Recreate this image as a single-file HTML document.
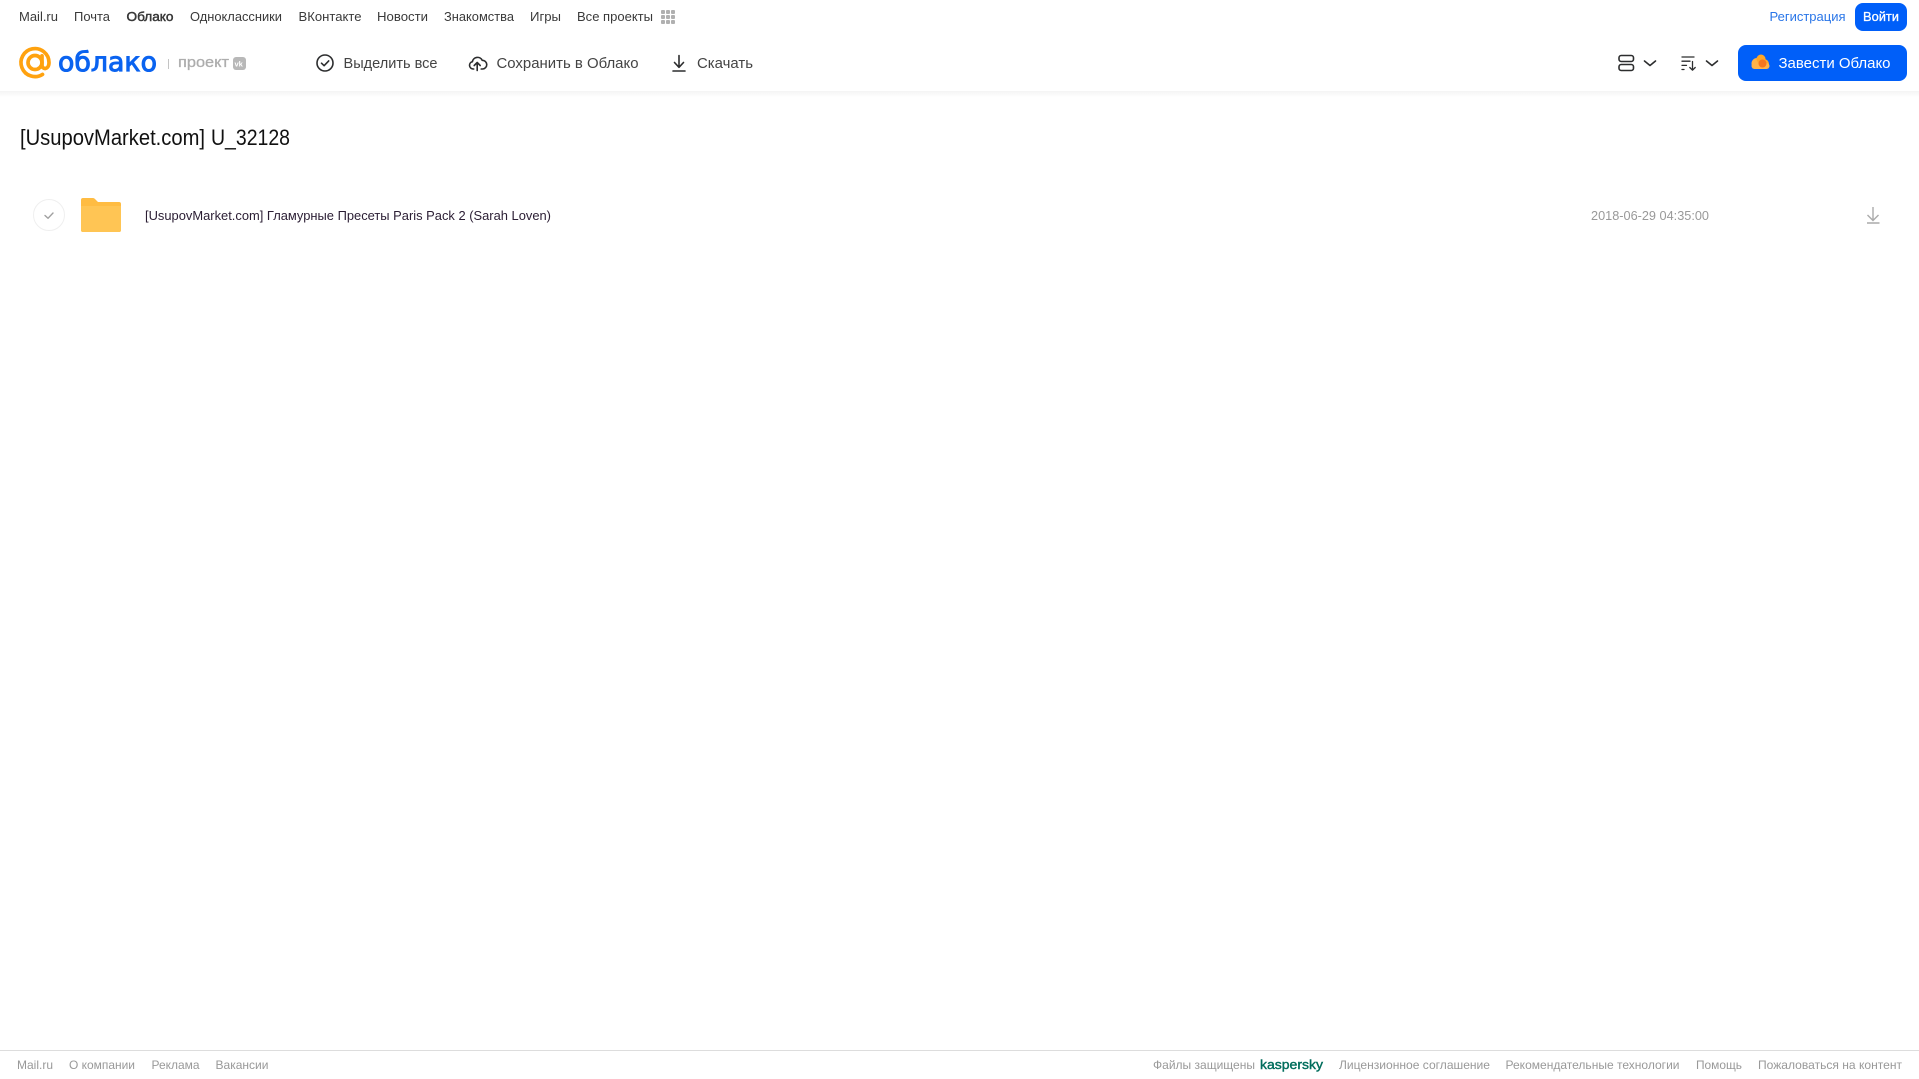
<!DOCTYPE html>
<html lang="ru"><head><meta charset="utf-8"><title>Облако</title>
<style>
html,body{margin:0;padding:0;background:#fff;width:1919px;height:1079px;overflow:hidden}
svg{display:block;position:absolute;left:0;top:0}
text{font-family:"Liberation Sans",sans-serif}
.n{font-size:13px;fill:#3a3a3a}
.t{font-size:14.5px;fill:#444}
.f{font-size:12px;fill:#999}
.i{fill:none;stroke:#2c2d2e;stroke-width:1.6;stroke-linecap:round;stroke-linejoin:round}
</style></head><body>
<svg width="1919" height="1079" viewBox="0 0 1919 1079" xmlns="http://www.w3.org/2000/svg">
<defs><linearGradient id="s" x1="0" y1="0" x2="0" y2="1"><stop offset="0" stop-color="#f4f4f4"/><stop offset="1" stop-color="#fff"/></linearGradient></defs>
<rect width="1919" height="1079" fill="#fff"/>
<rect x="0" y="91" width="1919" height="6" fill="url(#s)"/>

<text class="n" x="19" y="21" textLength="39" lengthAdjust="spacingAndGlyphs">Mail.ru</text>
<text class="n" x="74" y="21" textLength="36" lengthAdjust="spacingAndGlyphs">Почта</text>
<text class="n" x="126.500" y="21" textLength="47" lengthAdjust="spacingAndGlyphs" stroke="#333" stroke-width=".45">Облако</text>
<text class="n" x="190" y="21" textLength="92" lengthAdjust="spacingAndGlyphs">Одноклассники</text>
<text class="n" x="298.500" y="21" textLength="63" lengthAdjust="spacingAndGlyphs">ВКонтакте</text>
<text class="n" x="377" y="21" textLength="51" lengthAdjust="spacingAndGlyphs">Новости</text>
<text class="n" x="444" y="21" textLength="70" lengthAdjust="spacingAndGlyphs">Знакомства</text>
<text class="n" x="530" y="21" textLength="31" lengthAdjust="spacingAndGlyphs">Игры</text>
<text class="n" x="577" y="21" textLength="76" lengthAdjust="spacingAndGlyphs">Все проекты</text>
<g fill="#b0b0b0"><rect x="661" y="10" width="4" height="4" rx="1"/><rect x="666" y="10" width="4" height="4" rx="1"/><rect x="671" y="10" width="4" height="4" rx="1"/><rect x="661" y="15" width="4" height="4" rx="1"/><rect x="666" y="15" width="4" height="4" rx="1"/><rect x="671" y="15" width="4" height="4" rx="1"/><rect x="661" y="20" width="4" height="4" rx="1"/><rect x="666" y="20" width="4" height="4" rx="1"/><rect x="671" y="20" width="4" height="4" rx="1"/></g>

<text x="1769.500" y="21" font-size="13" fill="#2a76e8" textLength="76" lengthAdjust="spacingAndGlyphs">Регистрация</text>
<rect x="1855" y="3" width="52" height="28" rx="8" fill="#005ff9"/>
<text x="1863" y="21" font-size="13" fill="#fff" stroke="#fff" stroke-width=".3" textLength="36" lengthAdjust="spacingAndGlyphs">Войти</text>

<g fill="none" stroke="#ffa20f" stroke-width="3.700" stroke-linecap="round"><circle cx="35" cy="62.500" r="7"/><path d="M42 55.800V65C42 70 49 70 49 62.500A14 14 0 1 0 42.500 74.400"/></g>
<text x="58" y="71" font-size="27" fill="#0a63f0" stroke="#0a63f0" stroke-width="1" style='font-family:"DejaVu Sans",sans-serif' textLength="99" lengthAdjust="spacingAndGlyphs">облако</text>
<rect x="168" y="59" width="1" height="10" fill="#c4c4c4"/>
<text x="178" y="67" font-size="15" fill="#adadad" stroke="#adadad" stroke-width=".3" textLength="51" lengthAdjust="spacingAndGlyphs">проект</text>
<rect x="233" y="57" width="13" height="13" rx="3" fill="#b8b8b8"/>
<text x="234.500" y="66.500" font-size="7.500" font-weight="700" fill="#fff">vk</text>

<circle class="i" cx="325" cy="63" r="8"/><path class="i" d="M321.500 63.200l2.600 2.500 4.600-4.800"/>
<text class="t" x="343.500" y="68" textLength="94" lengthAdjust="spacingAndGlyphs">Выделить все</text>
<g transform="translate(-.8 -.5)"><path class="i" d="M474.500 69.500H473.800a3.700 3.700 0 0 1-.6-7.300 5.200 5.200 0 0 1 9.800-1.400 4.300 4.300 0 0 1 .4 8.700H482"/><path class="i" d="M478 71V63M475 66l3-3 3 3"/></g>
<text class="t" x="496.500" y="68" textLength="142" lengthAdjust="spacingAndGlyphs">Сохранить в Облако</text>
<path class="i" d="M679 55.500V67M674.500 62.500l4.500 4.800 4.500-4.800M673 71h12"/>
<text class="t" x="697" y="68" textLength="56" lengthAdjust="spacingAndGlyphs">Скачать</text>

<rect x="1619" y="55.500" width="14.500" height="6" rx="2.200" class="i"/><rect x="1619" y="64.500" width="14.500" height="6" rx="2.200" class="i"/>
<path class="i" d="M1644.500 61l5.500 4.500 5.500-4.500"/>
<path class="i" style="stroke-width:1.300" d="M1682 57h12M1682 61.200h8M1682 65.400h4.500M1682 69.500h2M1692.500 61.500v8.500M1689.800 67.500l2.700 2.700 2.700-2.700"/>
<path class="i" d="M1706.500 61l5.500 4.500 5.500-4.500"/>
<rect x="1738" y="45" width="169" height="36" rx="8" fill="#005ff9"/>
<circle cx="1757" cy="63.500" r="5.500" fill="#ffb347"/><circle cx="1761" cy="59" r="4.500" fill="#ffa726"/><circle cx="1764" cy="64" r="5" fill="#ffa726"/><rect x="1751.500" y="63" width="18" height="6" rx="3" fill="#ffb347"/><circle cx="1762.500" cy="63.500" r="4" fill="#f4761f"/>
<text x="1778.500" y="68" font-size="14.500" fill="#fff" textLength="112" lengthAdjust="spacingAndGlyphs">Завести Облако</text>

<text x="20" y="145" font-size="22" fill="#111" textLength="185" lengthAdjust="spacingAndGlyphs">[UsupovMarket.com]</text>
<text x="211" y="145" font-size="22" fill="#111" textLength="79" lengthAdjust="spacingAndGlyphs">U_32128</text>

<circle cx="49" cy="215" r="15.500" fill="#fff" stroke="#efefef"/>
<path d="M45 215.500l3 2.800 5-5.300" fill="none" stroke="#a0a0a0" stroke-width="1.400" stroke-linecap="round" stroke-linejoin="round"/>
<path d="M83 198H93a3 3 0 0 1 2 1l3 3H119a2 2 0 0 1 2 2V230a2 2 0 0 1-2 2H83a2 2 0 0 1-2-2V200a2 2 0 0 1 2-2z" fill="#ffbc42"/>
<path d="M81 206H121V230a2 2 0 0 1-2 2H83a2 2 0 0 1-2-2z" fill="#ffc554"/>
<text x="145" y="220" font-size="12.500" fill="#2a1d33" textLength="406" lengthAdjust="spacingAndGlyphs">[UsupovMarket.com] Гламурные Пресеты Paris Pack 2 (Sarah Loven)</text>
<text x="1591" y="220" font-size="12.500" fill="#999" textLength="118" lengthAdjust="spacingAndGlyphs">2018-06-29 04:35:00</text>
<path d="M1873 207V220.500M1867.500 215l5.500 5.500 5.500-5.500M1867 223h12.500" fill="none" stroke="#aaa" stroke-width="1.400"/>

<rect x="0" y="1050" width="1919" height="1" fill="#ddd"/>
<text class="f" x="17" y="1069" textLength="36" lengthAdjust="spacingAndGlyphs">Mail.ru</text>
<text class="f" x="69" y="1069" textLength="66" lengthAdjust="spacingAndGlyphs">О компании</text>
<text class="f" x="151.500" y="1069" textLength="48" lengthAdjust="spacingAndGlyphs">Реклама</text>
<text class="f" x="215.500" y="1069" textLength="53" lengthAdjust="spacingAndGlyphs">Вакансии</text>
<text class="f" x="1153" y="1069" textLength="102" lengthAdjust="spacingAndGlyphs">Файлы защищены</text>
<text x="1260" y="1069" font-size="13" fill="#006d5c" stroke="#006d5c" stroke-width=".4" textLength="63" lengthAdjust="spacingAndGlyphs">kaspersky</text>
<text class="f" x="1339" y="1069" textLength="151" lengthAdjust="spacingAndGlyphs">Лицензионное соглашение</text>
<text class="f" x="1505.500" y="1069" textLength="174" lengthAdjust="spacingAndGlyphs">Рекомендательные технологии</text>
<text class="f" x="1696" y="1069" textLength="46" lengthAdjust="spacingAndGlyphs">Помощь</text>
<text class="f" x="1758" y="1069" textLength="144" lengthAdjust="spacingAndGlyphs">Пожаловаться на контент</text>
</svg>
</body></html>
